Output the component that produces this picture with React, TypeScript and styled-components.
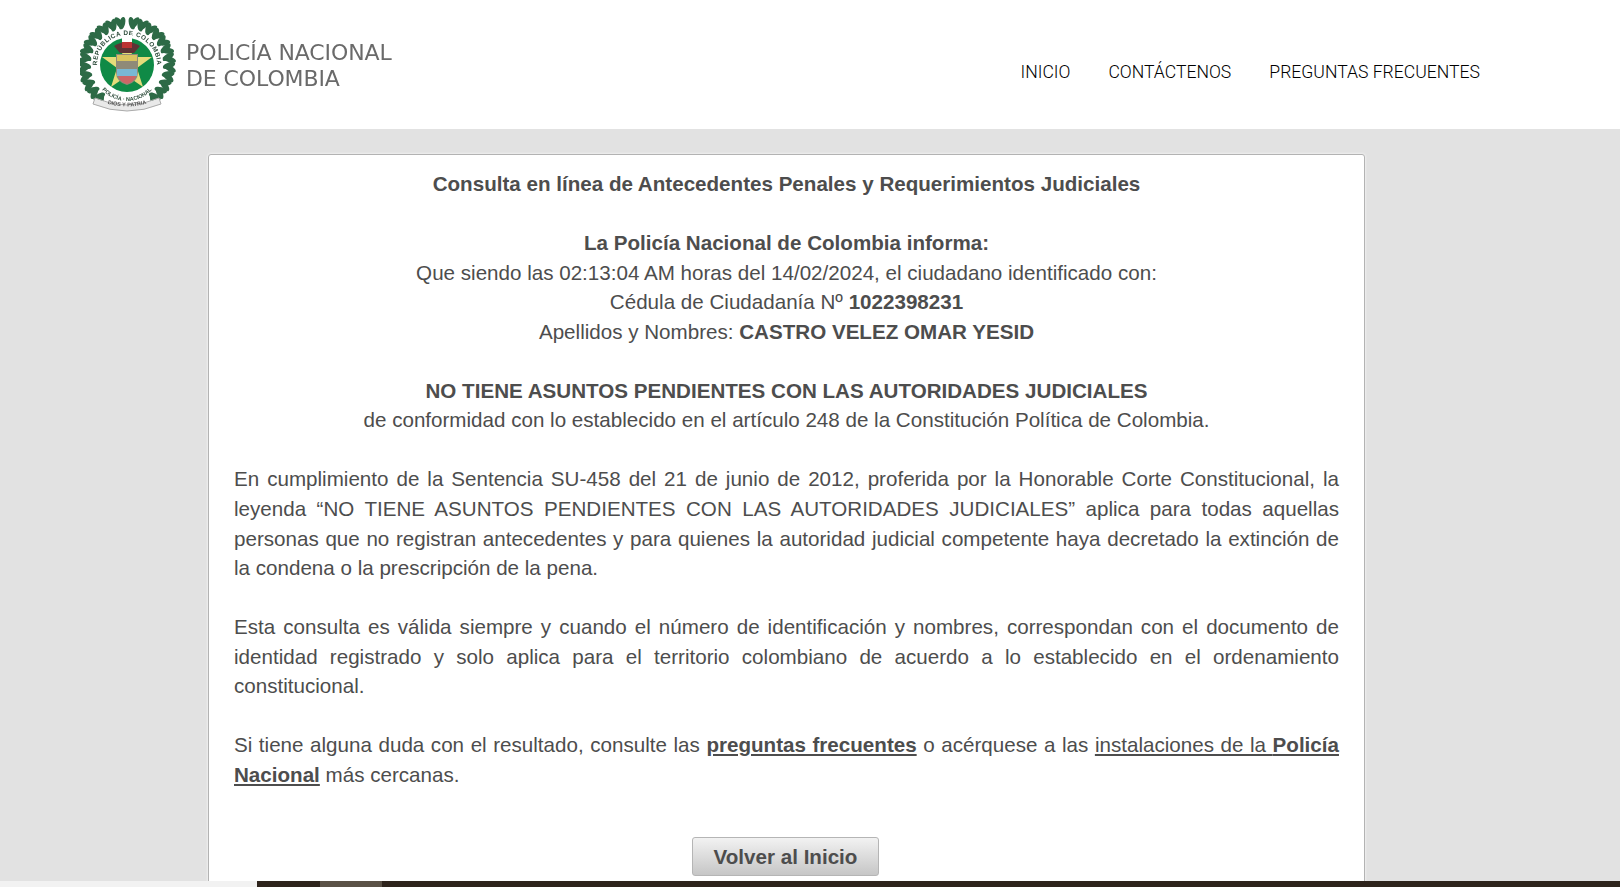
import styled, { createGlobalStyle } from 'styled-components';

const GlobalStyle = createGlobalStyle`
  html, body {
    margin: 0;
    padding: 0;
    height: 100%;
    overflow: hidden;
    background: #e2e2e2;
  }
`;

const SPage = styled.div`
  display: flex;
  flex-direction: column;
  height: 887px;
  overflow: hidden;
`;

const SHeader = styled.header`
  flex: none;
  display: flex;
  align-items: flex-start;
  justify-content: space-between;
  height: 129px;
  padding: 16px 140px 0 80px;
  box-sizing: border-box;
  background: #fff;
`;

const SBrand = styled.div`
  display: flex;
  align-items: center;
  gap: 10px;
`;

const SBrandText = styled.div`
  padding-top: 3px;
  color: #6a6a6a;
  font-family: 'DejaVu Sans', sans-serif;
  font-size: 22px;
  line-height: 26px;
  letter-spacing: -0.1px;
  filter: blur(0.35px);
`;

const SNav = styled.nav`
  display: flex;
  gap: 38px;
  padding-top: 44px;
`;

const SNavLink = styled.a`
  color: #000;
  font-family: Roboto, sans-serif;
  font-size: 17.6px;
  font-weight: 300;
  line-height: 24px;
  white-space: nowrap;
`;

const SMain = styled.main`
  flex: 1;
  min-height: 0;
  overflow: hidden;
  padding-top: 25px;
`;

const SCard = styled.section`
  box-sizing: border-box;
  width: 1157px;
  margin-left: 208px;
  padding: 14px 25px 200px;
  border: 1px solid #b3b3b3;
  border-radius: 3px;
  background: #fff;
  box-shadow: 0 0 3px rgba(255, 255, 255, 0.9);
  color: #4d4d4d;
  font-family: 'Liberation Sans', Arial, sans-serif;
  font-size: 20.6px;
  line-height: 29.55px;
`;

const SCentered = styled.p`
  margin: 0 0 29.55px;
  text-align: center;
`;

const SJustified = styled.p`
  margin: 0 0 29.55px;
  text-align: justify;
`;

const SLink = styled.a`
  color: inherit;
  text-decoration: underline;
`;

const SActions = styled.div`
  display: flex;
  justify-content: center;
  padding: 18px 2px 0 0;
`;

const SButton = styled.button`
  width: 187px;
  height: 39px;
  padding: 0;
  border: 1px solid #b5b5b5;
  border-radius: 3px;
  background: linear-gradient(#f2f2f2, #c6c6c6);
  color: #4d4d4d;
  font-family: 'Liberation Sans', Arial, sans-serif;
  font-size: 20.6px;
  font-weight: 700;
`;

const SFooterBar = styled.footer`
  flex: none;
  display: grid;
  grid-template-columns: 257px 63px 62px 1fr;
  height: 6px;
  background: #2e241c;
`;

const SFooterPiece = styled.div<{ $color: string }>`
  background: ${({ $color }) => $color};
`;

// degrees from the top of the wreath, mirrored for the other branch
const LEAF_ANGLES = [8, 20, 32, 44, 56, 68, 80, 92, 104, 116, 128, 140];

const PoliceLogo = () => {
  return (
    <svg width="96" height="96" viewBox="0 0 96 96" style={{ filter: 'blur(0.55px)' }}>
      <g fill="#2d6a46">
        {[-1, 1].map((side) =>
          LEAF_ANGLES.map((angle) => (
            <g key={`${side}-${angle}`} transform={`rotate(${side * angle} 47 49)`}>
              <ellipse cx={47 + side * 2} cy="6" rx="3" ry="6.5" transform={`rotate(${side * 28} ${47 + side * 2} 6)`} />
              <ellipse cx={47 - side * 1} cy="7" rx="3" ry="6.5" transform={`rotate(${-side * 22} ${47 - side} 7)`} />
            </g>
          )),
        )}
      </g>
      <circle cx="47" cy="49" r="36" fill="#fff" />
      <defs>
        <path id="ringTop" d="M17 49 a30 30 0 0 1 60 0" />
        <path id="ringBottom" d="M14 52 a33 33 0 0 0 66 0" />
        <path id="ribbon" d="M20 85 q27 11 54 0" />
      </defs>
      <text fontFamily="'Liberation Sans', sans-serif" fontSize="6.4" fontWeight="700" fill="#2b4a39" letterSpacing="0.5">
        <textPath href="#ringTop" startOffset="50%" textAnchor="middle">
          REPÚBLICA DE COLOMBIA
        </textPath>
      </text>
      <text fontFamily="'Liberation Sans', sans-serif" fontSize="5.5" fontWeight="700" fill="#2b4a39">
        <textPath href="#ringBottom" startOffset="50%" textAnchor="middle">
          POLICÍA · NACIONAL
        </textPath>
      </text>
      <circle cx="47" cy="49" r="27" fill="#0f8a46" />
      <polygon points="47,24 53,41 72,41 57,52 63,71 47,60 31,71 37,52 22,41 41,41" fill="#e4dc7a" />
      <path d="M36 38 h22 v18 q0 10 -11 13 q-11 -3 -11 -13 z" fill="#8f8a78" />
      <rect x="37" y="39" width="20" height="6" fill="#d9c45f" />
      <rect x="37" y="53" width="20" height="7" fill="#79b8d3" />
      <path d="M38 60 h18 q-2 6 -9 8 q-7 -2 -9 -8 z" fill="#c66" />
      <path d="M34 30 q13 -8 26 0 l-6 7 h-14 z" fill="#5e3335" />
      <path d="M42 19 h10 v11 h-10 z" fill="#fff" />
      <path d="M42 26 h10 v6 h-10 z" fill="#b33" />
      <path d="M15 82 q32 14 64 0 l2 6 q-34 14 -68 0 z" fill="#e9e9e9" stroke="#aaa" strokeWidth="1" />
      <text fontFamily="'Liberation Sans', sans-serif" fontSize="5.5" fontWeight="700" fill="#555">
        <textPath href="#ribbon" startOffset="50%" textAnchor="middle">
          DIOS Y PATRIA
        </textPath>
      </text>
    </svg>
  );
};

const App = () => {
  return (
    <SPage>
      <GlobalStyle />
      <SHeader>
        <SBrand>
          <PoliceLogo />
          <SBrandText>
            POLICÍA NACIONAL
            <br />
            DE COLOMBIA
          </SBrandText>
        </SBrand>
        <SNav>
          <SNavLink>INICIO</SNavLink>
          <SNavLink>CONTÁCTENOS</SNavLink>
          <SNavLink>PREGUNTAS FRECUENTES</SNavLink>
        </SNav>
      </SHeader>
      <SMain>
        <SCard>
          <SCentered>
            <b>Consulta en línea de Antecedentes Penales y Requerimientos Judiciales</b>
          </SCentered>
          <SCentered>
            <b>La Policía Nacional de Colombia informa:</b>
            <br />
            Que siendo las 02:13:04 AM horas del 14/02/2024, el ciudadano identificado con:
            <br />
            Cédula de Ciudadanía Nº <b>1022398231</b>
            <br />
            Apellidos y Nombres: <b>CASTRO VELEZ OMAR YESID</b>
          </SCentered>
          <SCentered>
            <b>NO TIENE ASUNTOS PENDIENTES CON LAS AUTORIDADES JUDICIALES</b>
            <br />
            de conformidad con lo establecido en el artículo 248 de la Constitución Política de Colombia.
          </SCentered>
          <SJustified>
            En cumplimiento de la Sentencia SU-458 del 21 de junio de 2012, proferida por la Honorable Corte
            Constitucional, la leyenda “NO TIENE ASUNTOS PENDIENTES CON LAS AUTORIDADES JUDICIALES” aplica para
            todas aquellas personas que no registran antecedentes y para quienes la autoridad judicial competente
            haya decretado la extinción de la condena o la prescripción de la pena.
          </SJustified>
          <SJustified>
            Esta consulta es válida siempre y cuando el número de identificación y nombres, correspondan con el
            documento de identidad registrado y solo aplica para el territorio colombiano de acuerdo a lo
            establecido en el ordenamiento constitucional.
          </SJustified>
          <SJustified>
            Si tiene alguna duda con el resultado, consulte las{' '}
            <SLink>
              <b>preguntas frecuentes</b>
            </SLink>{' '}
            o acérquese a las{' '}
            <SLink>
              instalaciones de la <b>Policía Nacional</b>
            </SLink>{' '}
            más cercanas.
          </SJustified>
          <SActions>
            <SButton>Volver al Inicio</SButton>
          </SActions>
        </SCard>
      </SMain>
      <SFooterBar>
        <SFooterPiece $color="#f2f2f2" />
        <SFooterPiece $color="#2e241c" />
        <SFooterPiece $color="#5a5146" />
        <SFooterPiece $color="#2e241c" />
      </SFooterBar>
    </SPage>
  );
};

export default App;
